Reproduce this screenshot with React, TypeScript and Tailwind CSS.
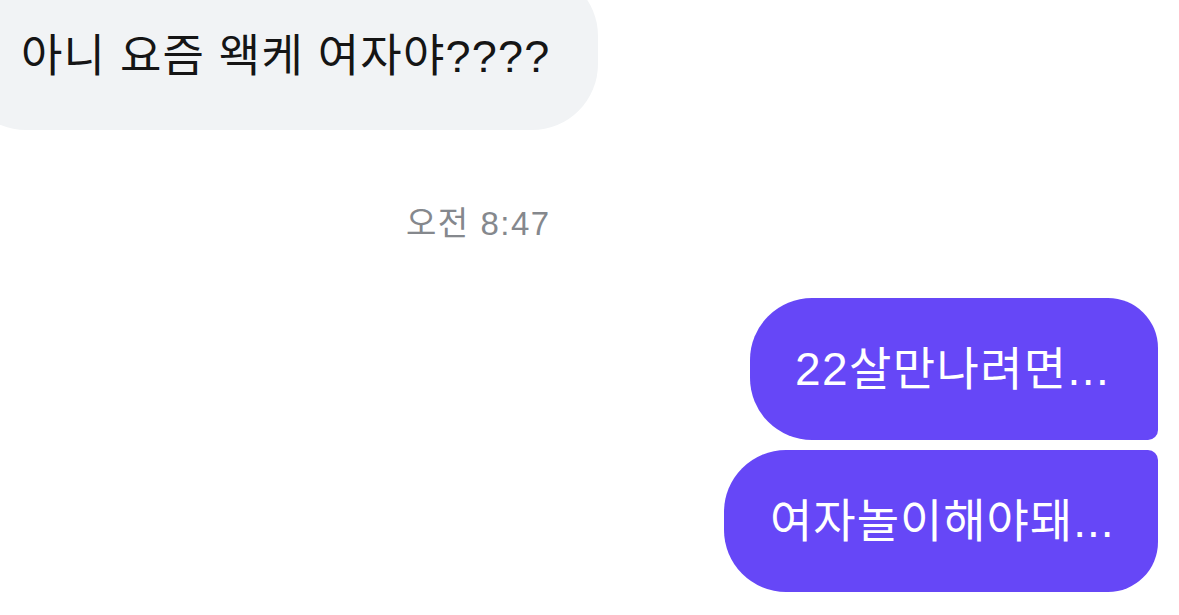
const font = "font-['Liberation_Sans','Noto_Sans_CJK_KR',sans-serif]";

export default function App() {
  return (
    <div className={`w-[1179px] h-[615px] overflow-hidden bg-white flex flex-col ${font}`}>
      {/* received bubble, cut off at the top-left */}
      <div className="-ml-[40px] -mt-[30px] h-[160px] w-[638px] shrink-0 rounded-[66px] bg-[#f1f3f5] pl-[61px] pt-[12px] flex items-center">
        <span className="text-[45px] leading-none tracking-[1.2px] text-[#151515]">아니 요즘 왝케 여자야????</span>
      </div>

      <div className="mt-[75px] ml-[406px] h-[36px] flex items-center text-[33px] leading-none tracking-[1.5px] text-[#85888d]">
        오전 8:47
      </div>

      {/* sent bubbles */}
      <div className="mt-[57px] flex flex-col items-end gap-[10px] pr-[21px]">
        <div className="h-[142px] w-[408px] rounded-tl-[62px] rounded-bl-[62px] rounded-tr-[50px] rounded-br-[10px] bg-[#6647f7] pl-[45px] flex items-center">
          <span className="text-[46px] leading-none tracking-[1.4px] text-white">22살만나려면...</span>
        </div>
        <div className="h-[142px] w-[434px] rounded-tl-[62px] rounded-bl-[62px] rounded-tr-[10px] rounded-br-[50px] bg-[#6647f7] pl-[46px] flex items-center">
          <span className="text-[46px] leading-none tracking-[1px] text-white">여자놀이해야돼...</span>
        </div>
      </div>
    </div>
  );
}
